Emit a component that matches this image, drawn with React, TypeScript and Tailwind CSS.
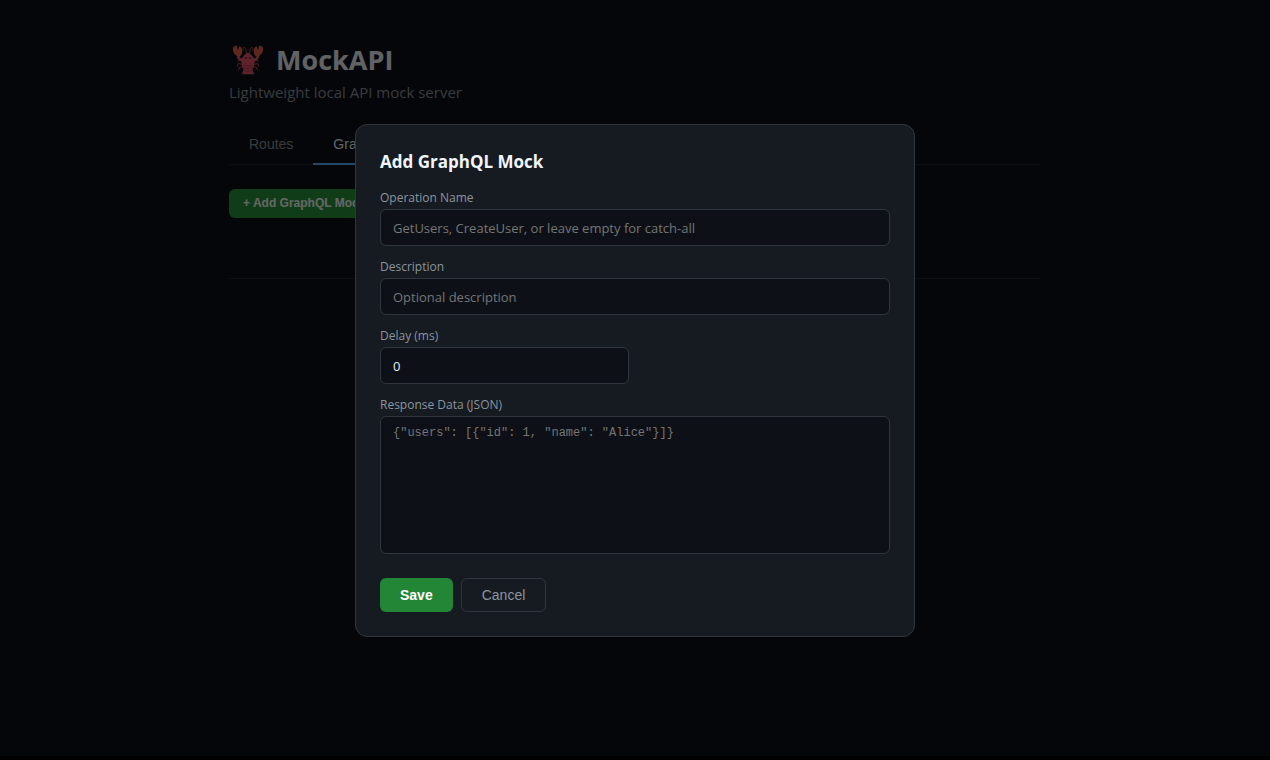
import { useState } from 'react';

const fieldClass =
  "block w-full h-[37px] rounded-md border border-[#30363d] bg-[#0d1117] px-3 pt-0.5 font-['Open_Sans','Noto_Sans',sans-serif] text-[13px] text-[#e6edf3] placeholder:text-[#757575] outline-none focus:border-[#58a6ff]";
const labelClass = 'mb-[3px] block text-[12px] leading-[17px] text-[#8b949e]';

function Lobster() {
  return (
    <svg viewBox="0 0 36 36" className="size-8 shrink-0" fill="none" aria-hidden="true">
      <g stroke="#c8455c" strokeWidth="1.1" strokeLinecap="round">
        <path d="M16.500 12C15.500 8 16 5 14.500 4S12 5 12.500 7M19.500 12c1-4 .5-7 2-8S24 5 23.500 7" />
        <path d="M12 20l-4-2-1.500 2M12 23l-5-1-1 3M12.500 26l-4 0-1 3M24 20l4-2 1.500 2M24 23l5-1 1 3M23.500 26l4 0 1 3" />
      </g>
      <path d="M14 18C9 18 6.500 16 6.500 12M22 18c5 0 7.500-2 7.500-6" stroke="#e8566a" strokeWidth="2.800" />
      <path d="M9 14C4 14 1 10 1 6 1 3 3 1.500 5.500 2L6.500 7 8.500 2.500C12.500 4 12.500 11 9 14Z" fill="#e8644c" />
      <path d="M27 14C32 14 35 10 35 6 35 3 33 1.500 30.500 2L29.500 7 27.500 2.500C23.500 4 23.500 11 27 14Z" fill="#e8644c" />
      <path d="M18 9.500c3.500 2 7.500 5 7.500 10.500 0 4-1.500 6-2.500 9l2 5H11l2-5c-1-3-2.500-5-2.500-9 0-5.500 4-8.500 7.500-10.500Z" fill="#e8566a" />
      <path d="M13 24q5 2 10 0M14 27q4 2 8 0M14 30q4 2 8 0" stroke="#b8304a" strokeWidth="0.900" />
      <circle cx="15.500" cy="15.500" r="1" fill="#292f33" />
      <circle cx="20.500" cy="15.500" r="1" fill="#292f33" />
    </svg>
  );
}

function MockDialog({ onClose }: { onClose: () => void }) {
  return (
    <div className="fixed inset-0 flex items-center justify-center bg-black/60 p-4">
      <form
        role="dialog"
        aria-modal="true"
        aria-labelledby="dialog-title"
        onSubmit={(e) => {
          e.preventDefault();
          onClose();
        }}
        className="w-full max-w-[560px] rounded-xl border border-[#30363d] bg-[#161b22] p-6"
      >
        <h2 id="dialog-title" className="mb-[14px] text-[17px] leading-[26px] font-bold text-[#f0f6fc]">
          Add GraphQL Mock
        </h2>
        <div className="mb-3">
          <label htmlFor="operation" className={labelClass}>Operation Name</label>
          <input id="operation" className={fieldClass} placeholder="GetUsers, CreateUser, or leave empty for catch-all" />
        </div>
        <div className="mb-3">
          <label htmlFor="description" className={labelClass}>Description</label>
          <input id="description" className={fieldClass} placeholder="Optional description" />
        </div>
        <div className="mb-3 grid grid-cols-2 gap-3">
          <div>
            <label htmlFor="delay" className={labelClass}>Delay (ms)</label>
            <input id="delay" inputMode="numeric" defaultValue="0" className={fieldClass} />
          </div>
        </div>
        <div>
          <label htmlFor="response" className={labelClass}>Response Data (JSON)</label>
          <textarea
            id="response"
            className="block h-[138px] w-full resize-none rounded-md border border-[#30363d] bg-[#0d1117] px-3 py-2 font-['Liberation_Mono',monospace] text-[12px] leading-4 text-[#e6edf3] outline-none placeholder:text-[#757575] focus:border-[#58a6ff]"
            placeholder={'{"users": [{"id": 1, "name": "Alice"}]}'}
          />
        </div>
        <div className="mt-6 flex gap-2 font-['Liberation_Sans',Arial,sans-serif] text-[14px] leading-4">
          <button type="submit" className="rounded-md bg-[#238636] px-5 py-2 font-bold text-white">Save</button>
          <button type="button" onClick={onClose} className="rounded-md border border-[#30363d] px-5 py-2 text-[#8b949e]">Cancel</button>
        </div>
      </form>
    </div>
  );
}

export default function App() {
  const [open, setOpen] = useState(true);
  return (
    <div className="min-h-screen bg-black pb-1 font-['Open_Sans','Noto_Sans',sans-serif]">
      <div className="min-h-[calc(100vh-4px)] bg-[#0d1117]">
        <main className="mx-auto max-w-[860px] px-6 pt-10">
          <header>
            <h1 className="flex items-center gap-3 pl-[3px] text-[27px] leading-10 font-bold text-[#f0f6fc]">
              <Lobster />
              MockAPI
            </h1>
            <p className="text-[15px] leading-6 text-[#8b949e]">Lightweight local API mock server</p>
          </header>
          <nav className="mt-[21px] flex border-b border-[#21262d] font-['Liberation_Sans',Arial,sans-serif] text-[14px] leading-4">
            <button className="-mb-px border-b-2 border-transparent px-5 py-[11px] text-[#8b949e]">Routes</button>
            <button className="-mb-px border-b-2 border-[#58b4ff] px-5 py-[11px] text-[#f0f6fc]">GraphQL</button>
          </nav>
          <section className="border-b border-[#21262d] pt-6 pb-[60px]">
            <button
              onClick={() => setOpen(true)}
              className="block rounded-md bg-[#289a3e] px-[14px] py-[7px] font-['Liberation_Sans',Arial,sans-serif] text-[12px] leading-[15px] font-bold text-white"
            >
              + Add GraphQL Mock
            </button>
          </section>
        </main>
      </div>
      {open && <MockDialog onClose={() => setOpen(false)} />}
    </div>
  );
}
